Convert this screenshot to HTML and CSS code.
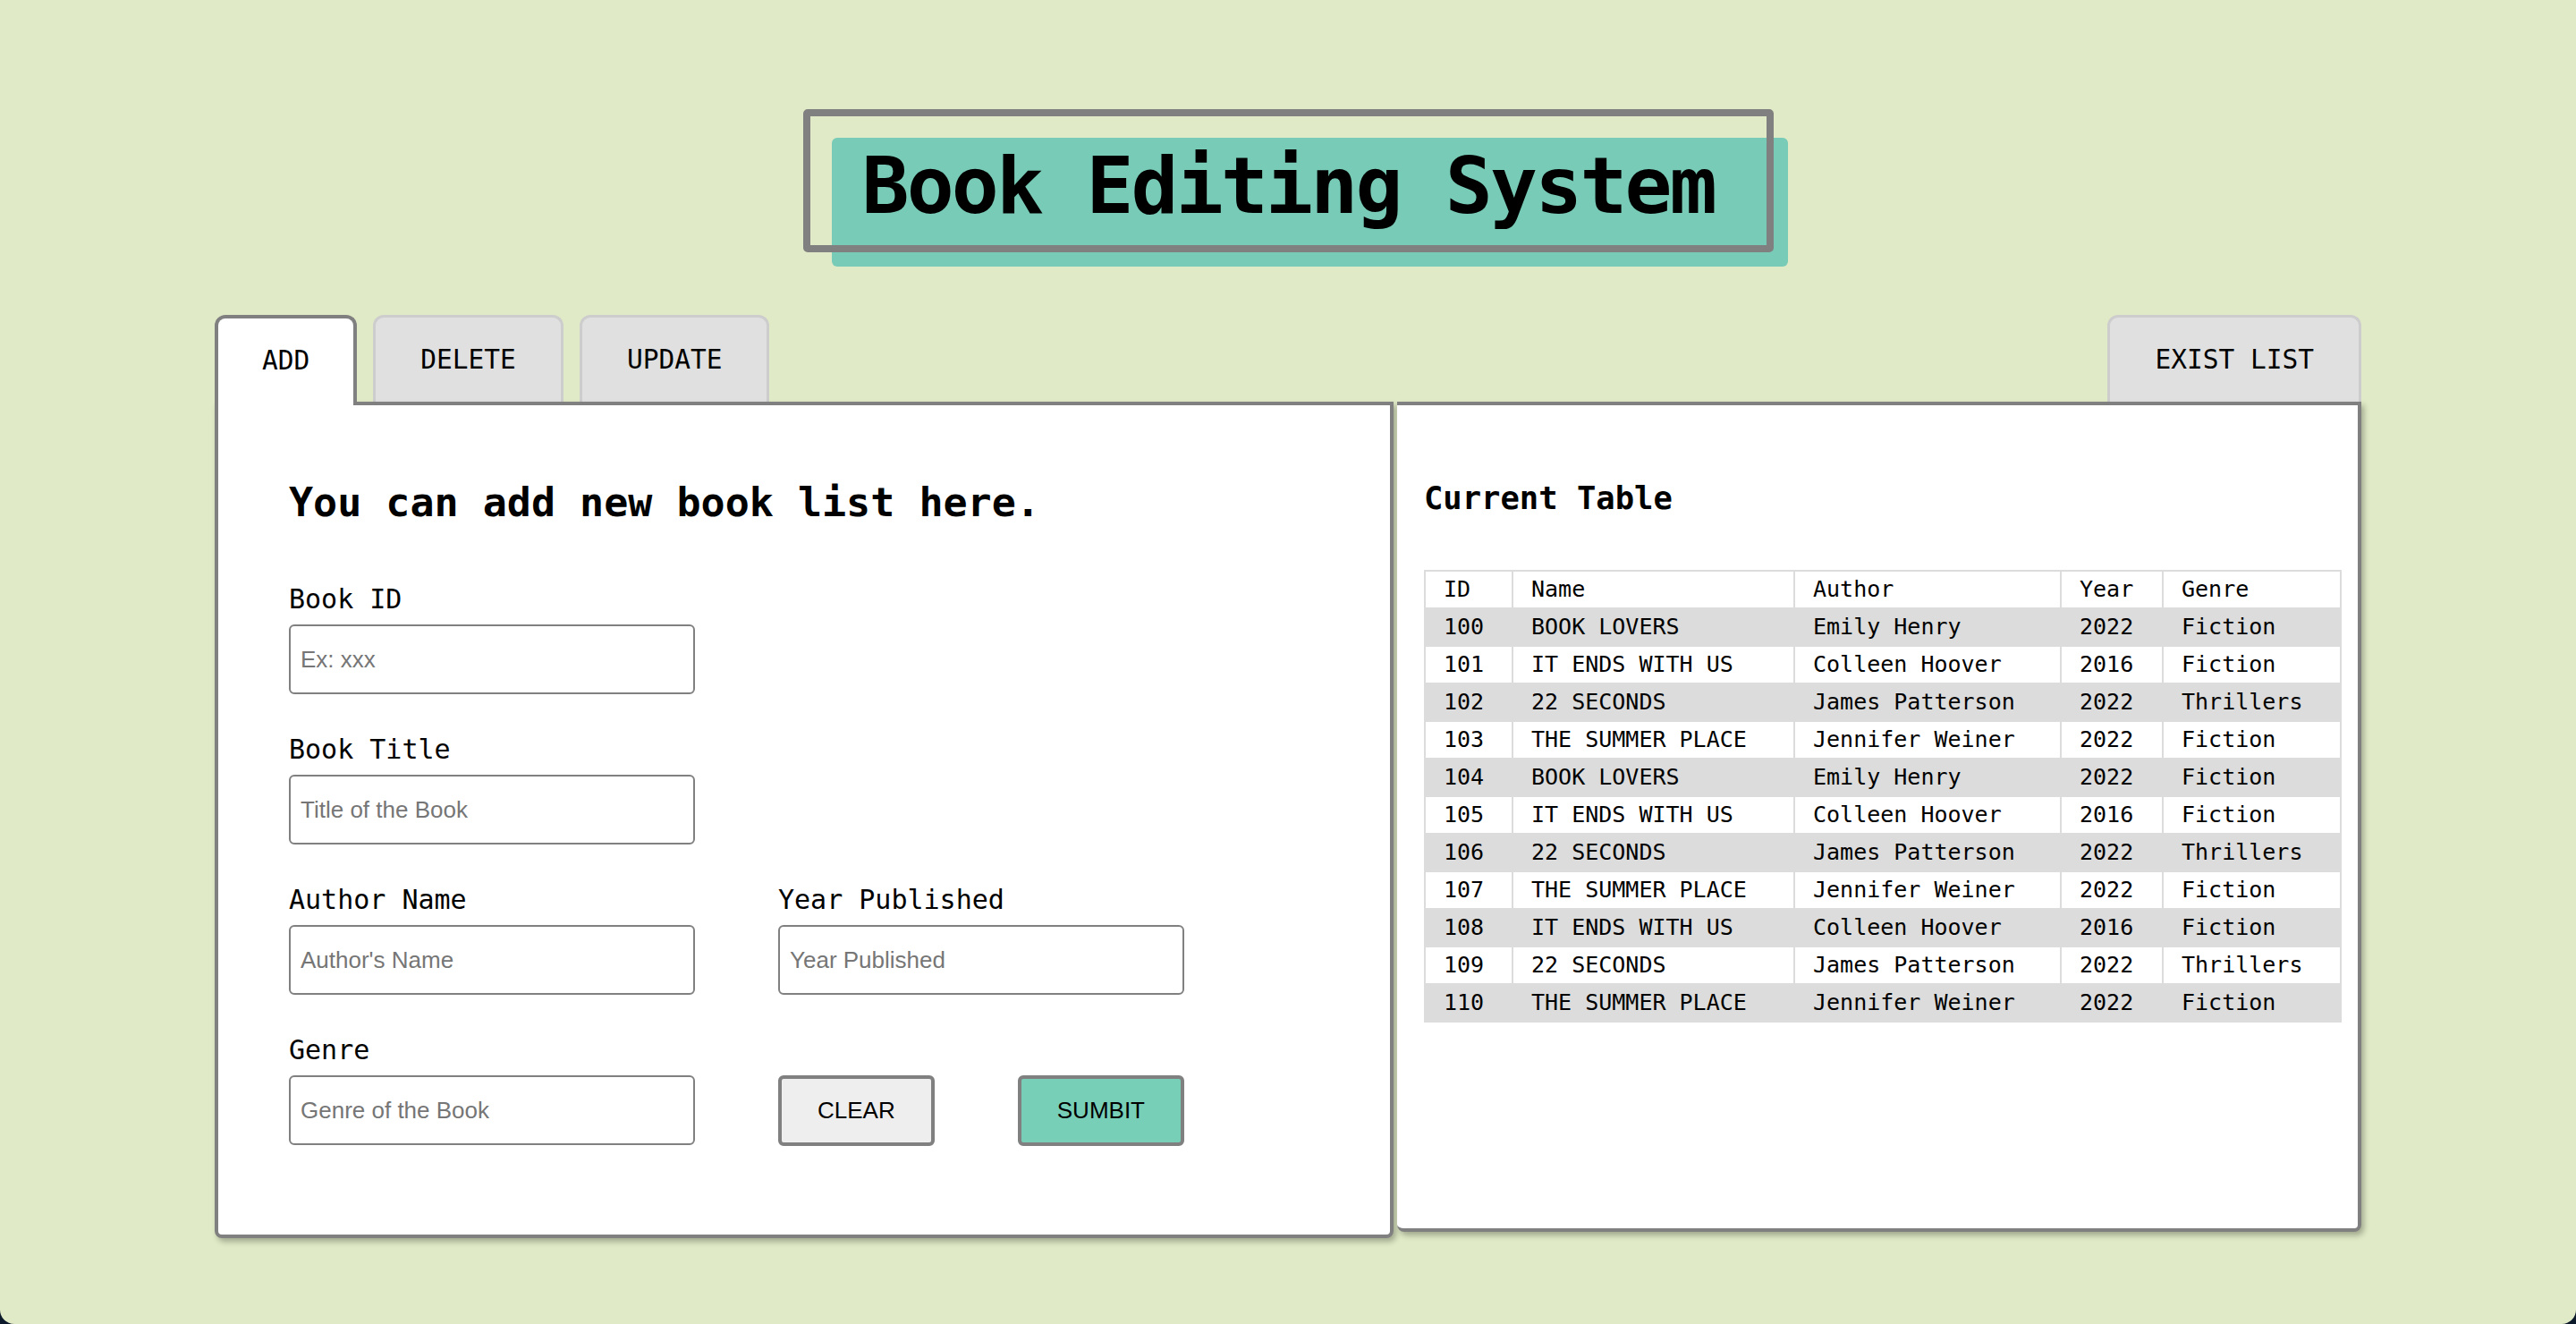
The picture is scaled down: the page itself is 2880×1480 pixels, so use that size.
FILE: index.html
```html
<!DOCTYPE html>
<html lang="en">
<head>
<meta charset="utf-8">
<title>Book Editing System</title>
<link rel="stylesheet" href="styles.css">
</head>
<body>
<div class="page">
  <header class="title-wrap">
    <h1 class="title">Book Editing System</h1>
  </header>

  <nav class="tabs">
    <button class="tab tab-active">ADD</button>
    <button class="tab">DELETE</button>
    <button class="tab">UPDATE</button>
    <button class="tab tab-right">EXIST LIST</button>
  </nav>

  <main class="panels">
    <section class="panel panel-form">
      <h2 class="form-heading">You can add new book list here.</h2>
      <form class="form-grid">
        <div class="field f-id">
          <label class="label" for="bid">Book ID</label>
          <input class="input" id="bid" type="text" placeholder="Ex: xxx">
        </div>
        <div class="field f-title">
          <label class="label" for="btitle">Book Title</label>
          <input class="input" id="btitle" type="text" placeholder="Title of the Book">
        </div>
        <div class="field f-author">
          <label class="label" for="bauthor">Author Name</label>
          <input class="input" id="bauthor" type="text" placeholder="Author's Name">
        </div>
        <div class="field f-year">
          <label class="label" for="byear">Year Published</label>
          <input class="input" id="byear" type="text" placeholder="Year Published">
        </div>
        <div class="field f-genre">
          <label class="label" for="bgenre">Genre</label>
          <input class="input" id="bgenre" type="text" placeholder="Genre of the Book">
        </div>
        <div class="actions">
          <button type="button" class="btn btn-clear">CLEAR</button>
          <button type="button" class="btn btn-submit">SUMBIT</button>
        </div>
      </form>
    </section>

    <section class="panel panel-table">
      <h3 class="table-heading">Current Table</h3>
      <table class="book-table">
        <colgroup>
          <col class="col-id"><col class="col-name"><col class="col-author"><col class="col-year"><col class="col-genre">
        </colgroup>
        <thead>
          <tr><th>ID</th><th>Name</th><th>Author</th><th>Year</th><th>Genre</th></tr>
        </thead>
        <tbody>
          <tr><td>100</td><td>BOOK LOVERS</td><td>Emily Henry</td><td>2022</td><td>Fiction</td></tr>
          <tr><td>101</td><td>IT ENDS WITH US</td><td>Colleen Hoover</td><td>2016</td><td>Fiction</td></tr>
          <tr><td>102</td><td>22 SECONDS</td><td>James Patterson</td><td>2022</td><td>Thrillers</td></tr>
          <tr><td>103</td><td>THE SUMMER PLACE</td><td>Jennifer Weiner</td><td>2022</td><td>Fiction</td></tr>
          <tr><td>104</td><td>BOOK LOVERS</td><td>Emily Henry</td><td>2022</td><td>Fiction</td></tr>
          <tr><td>105</td><td>IT ENDS WITH US</td><td>Colleen Hoover</td><td>2016</td><td>Fiction</td></tr>
          <tr><td>106</td><td>22 SECONDS</td><td>James Patterson</td><td>2022</td><td>Thrillers</td></tr>
          <tr><td>107</td><td>THE SUMMER PLACE</td><td>Jennifer Weiner</td><td>2022</td><td>Fiction</td></tr>
          <tr><td>108</td><td>IT ENDS WITH US</td><td>Colleen Hoover</td><td>2016</td><td>Fiction</td></tr>
          <tr><td>109</td><td>22 SECONDS</td><td>James Patterson</td><td>2022</td><td>Thrillers</td></tr>
          <tr><td>110</td><td>THE SUMMER PLACE</td><td>Jennifer Weiner</td><td>2022</td><td>Fiction</td></tr>
        </tbody>
      </table>
    </section>
  </main>
</div>
</body>
</html>
```

FILE: styles.css
```css
*, *::before, *::after { box-sizing: border-box; }

html, body {
  margin: 0;
  padding: 0;
  background: #0d1a2c;
}

body {
  font-family: "DejaVu Sans Mono", "Liberation Mono", monospace;
  color: #000;
}

.page {
  width: 2880px;
  height: 1480px;
  background: #e0eac6;
  border-radius: 0 0 16px 16px;
  padding-top: 154px;
  overflow: hidden;
}

/* ---------- Title ---------- */
.title-wrap {
  display: flex;
  justify-content: center;
  padding-left: 48px;
}

.title {
  position: relative;
  margin: 0;
  width: 1069px;
  height: 144px;
  padding: 5px 0 0 34px;
  background: #78cbb7;
  border-radius: 6px;
  font-family: "DejaVu Sans Mono", monospace;
  font-weight: bold;
  font-size: 88px;
  letter-spacing: -2.8px;
  line-height: 98px;
  white-space: nowrap;
}

.title::after {
  content: "";
  position: absolute;
  left: -32px;
  top: -32px;
  width: 1085px;
  height: 160px;
  border: 8px solid #808080;
  border-radius: 5px;
  pointer-events: none;
}

/* ---------- Tabs ---------- */
.tabs {
  width: 2400px;
  margin: 54px auto 0;
  display: flex;
  align-items: flex-end;
  gap: 18px;
  height: 97px;
}

.tab {
  height: 97px;
  padding: 2px 50px 0;
  border: 3px solid #cdcdcd;
  border-bottom: none;
  border-radius: 12px 12px 0 0;
  background: #e0e0e0;
  font-family: "DejaVu Sans Mono", monospace;
  font-size: 29.5px;
  color: #000;
  line-height: 1;
}

.tab-active {
  position: relative;
  z-index: 2;
  height: 101px;
  margin-bottom: -4px;
  padding: 2px 49px 4px;
  background: #fff;
  border: 4px solid #808080;
  border-bottom: none;
}

.tab-right { margin-left: auto; }

/* ---------- Panels ---------- */
.panels {
  width: 2400px;
  margin: 0 auto;
  display: grid;
  grid-template-columns: 1318px 1078px;
  column-gap: 4px;
  align-items: start;
}

.panel {
  background: #fff;
  border: 4px solid #808080;
  border-radius: 0 0 8px 8px;
  box-shadow: 3px 4px 6px rgba(0, 0, 0, 0.28);
}

.panel-form {
  padding: 83px 79px 100px 79px;
}

.form-heading {
  margin: 0 0 64px;
  font-size: 45px;
  line-height: 52px;
  font-weight: bold;
}

.form-grid {
  display: grid;
  grid-template-columns: 454px 454px;
  grid-template-areas:
    "id ."
    "title ."
    "author year"
    "genre actions";
  column-gap: 93px;
  row-gap: 44px;
}

.field {
  display: flex;
  flex-direction: column;
}

.f-id { grid-area: id; }
.f-title { grid-area: title; }
.f-author { grid-area: author; }
.f-year { grid-area: year; }
.f-genre { grid-area: genre; }

.label {
  font-size: 30px;
  line-height: 36px;
  margin-bottom: 10px;
}

.input {
  width: 454px;
  height: 78px;
  border: 2px solid #808080;
  border-radius: 6px;
  padding: 0 11px;
  font-family: "Liberation Sans", Arial, sans-serif;
  font-size: 26px;
  color: #000;
  background: #fff;
  outline: none;
}

.input::placeholder { color: #767676; }

.actions {
  grid-area: actions;
  align-self: end;
  display: flex;
  justify-content: space-between;
  align-items: center;
  margin-bottom: -1px;
}

.btn {
  height: 79px;
  padding: 0 40px;
  border: 4px solid #808080;
  border-radius: 6px;
  font-family: "Liberation Sans", Arial, sans-serif;
  font-size: 26px;
  color: #000;
}

.btn-clear { background: #eeeeee; }
.btn-submit { background: #78cfb8; }

/* ---------- Table panel ---------- */
.panel-table {
  height: 928px;
  border-left: none;
  padding: 83px 20px 0 30px;
}

.table-heading {
  margin: 0 0 59px;
  font-size: 35.5px;
  line-height: 42px;
  font-weight: bold;
}

.book-table {
  width: 1024px;
  table-layout: fixed;
  border-collapse: collapse;
  font-size: 25px;
}

.col-id { width: 98px; }
.col-name { width: 315px; }
.col-author { width: 298px; }
.col-year { width: 114px; }
.col-genre { width: 199px; }

.book-table th,
.book-table td {
  border: 2px solid #dcdcdc;
  padding: 0 20px;
  height: 42px;
  line-height: 40px;
  text-align: left;
  font-weight: normal;
  white-space: nowrap;
}

.book-table tbody tr:nth-child(odd) { background: #dcdcdc; }
.book-table tbody tr:nth-child(even) { background: #fff; }
```
